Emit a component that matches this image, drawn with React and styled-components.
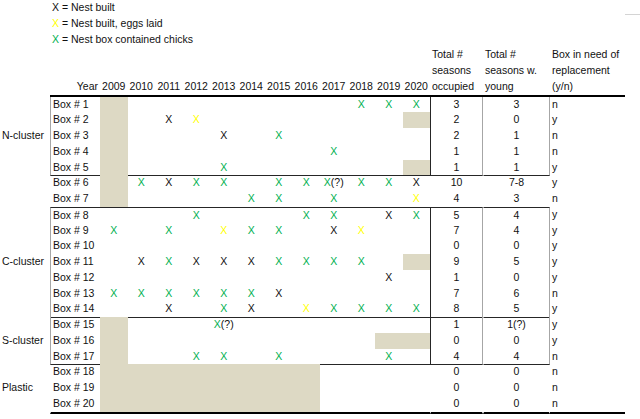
import styled, { createGlobalStyle, css } from "styled-components";

const ROW_H = "15.75px";
const COLS = "50px 50px repeat(12, 27.5px) 53px 67px 75px 15px";
const SHADE = "#ddd9c4";
const DARK = "#262626";
const GRAY = "#a6a6a6";
const TONES = { k: "#111", y: "#ffff00", g: "#00b050" };

const YEARS = [2009, 2010, 2011, 2012, 2013, 2014, 2015, 2016, 2017, 2018, 2019, 2020];

// marks per year: . empty, # shaded, k black X, y yellow X, g green X, G green X with (?)
const SECTIONS = [
  {
    label: "N-cluster",
    at: 2,
    framed: true,
    rows: [
      ["Box # 1", "#........ggg", "3", "3", "n"],
      ["Box # 2", "#.ky.......#", "2", "0", "y"],
      ["Box # 3", "#...k.g.....", "2", "1", "n"],
      ["Box # 4", "#.......g...", "1", "1", "n"],
      ["Box # 5", "#...g......#", "1", "1", "y"],
    ],
  },
  {
    label: "",
    rows: [
      ["Box # 6", "#gkgg.ggGggk", "10", "7-8", "y"],
      ["Box # 7", "#....gg.g..y", "4", "3", "n"],
    ],
  },
  {
    label: "C-cluster",
    at: 3,
    framed: true,
    top: true,
    rows: [
      ["Box # 8", "...g...gg.kg", "5", "4", "y"],
      ["Box # 9", "g.g.ygg.ky..", "7", "4", "y"],
      ["Box # 10", "............", "0", "0", "y"],
      ["Box # 11", ".kgkkkgggg.#", "9", "5", "y"],
      ["Box # 12", "..........k.", "1", "0", "y"],
      ["Box # 13", "ggggggk.....", "7", "6", "n"],
      ["Box # 14", "..k.gk.ygggg", "8", "5", "y"],
    ],
  },
  {
    label: "S-cluster",
    at: 1,
    framed: true,
    rows: [
      ["Box # 15", "#...G.......", "1", "1(?)", "y"],
      ["Box # 16", "#.........##", "0", "0", "y"],
      ["Box # 17", "#..gg.g...g.", "4", "4", "n"],
    ],
  },
  {
    label: "Plastic",
    at: 1,
    thick: true,
    rows: [
      ["Box # 18", "########....", "0", "0", "n"],
      ["Box # 19", "########....", "0", "0", "n"],
      ["Box # 20", "########....", "0", "0", "n"],
    ],
  },
];

const GlobalStyle = createGlobalStyle`
  html, body {
    margin: 0;
    padding: 0;
    background: #fff;
  }
  body {
    font-family: "Liberation Sans", Arial, sans-serif;
    font-size: 10.5px;
    color: #111;
  }
`;

const Page = styled.div`
  width: 640px;
  height: 419px;
  overflow: hidden;
  background: #fff;
`;

const Legend = styled.div`
  display: flex;
  flex-direction: column;
  padding-left: 52px;
`;

const LegendLine = styled.div`
  display: flex;
  height: ${ROW_H};
  line-height: ${ROW_H};
  white-space: nowrap;
`;

// faint edge of a neighbouring cell, top right
const Rule = styled.span`
  margin-left: auto;
  align-self: flex-end;
  width: 15px;
  height: 1px;
  margin-bottom: 1px;
  background: #d4d4d4;
`;

const Mark = styled.span`
  color: ${(p) => TONES[p.$tone]};
`;

const HeaderRow = styled.div`
  display: grid;
  grid-template-columns: ${COLS};
  height: 49.25px;
`;

const HeaderCell = styled.div`
  box-sizing: border-box;
  display: flex;
  align-items: flex-end;
  justify-content: ${(p) => p.$align || "center"};
  padding: 0 ${(p) => (p.$align === "flex-end" ? "2px" : "0")} 0
    ${(p) => (p.$align === "flex-start" ? "2px" : "0")};
  line-height: ${ROW_H};
  white-space: nowrap;
  border-bottom: ${(p) => (p.$open ? "0" : "2px solid #000")};
`;

const Body = styled.div`
  display: flex;
  flex-direction: column;
`;

const Row = styled.div`
  display: grid;
  grid-template-columns: ${COLS};
  height: ${ROW_H};
  line-height: ${ROW_H};
  white-space: nowrap;
`;

const edges = css`
  box-sizing: border-box;
  border-top: ${(p) => (p.$top ? `1px solid ${DARK}` : "0")};
  border-bottom: ${(p) =>
    p.$thick ? "2px solid #000" : p.$bottom ? `1px solid ${DARK}` : "0"};
`;

const ClusterCell = styled.div`
  padding-left: 2px;
`;

const BoxCell = styled.div`
  ${edges};
  padding-left: 2px;
  border-left: 1px solid ${(p) => (p.$framed ? GRAY : "transparent")};
`;

const YearCell = styled.div`
  ${edges};
  text-align: center;
  background: ${(p) => (p.$shaded ? SHADE : "transparent")};
`;

const TotalCell = styled.div`
  ${edges};
  text-align: center;
  border-left: 1px solid ${(p) => (p.$framed && p.$lead ? DARK : "transparent")};
  border-right: 1px solid ${(p) => (p.$framed ? GRAY : "transparent")};
`;

const ReplaceCell = styled.div`
  box-sizing: border-box;
  padding-left: 2px;
  border-bottom: ${(p) => (p.$thick ? "2px solid #000" : "0")};
`;

const YearMark = ({ code }) => {
  if (code === "." || code === "#") return null;
  if (code === "G")
    return (
      <>
        <Mark $tone="g">X</Mark>(?)
      </>
    );
  return <Mark $tone={code}>X</Mark>;
};

const Section = ({ section }) => {
  const { label, at, framed, top, thick, rows } = section;
  return rows.map(([box, marks, occupied, young, repl], i) => {
    const edge = {
      $top: framed && top && i === 0,
      $bottom: framed && i === rows.length - 1,
      $thick: thick && i === rows.length - 1,
    };
    return (
      <Row key={box}>
        <ClusterCell>{i === at ? label : ""}</ClusterCell>
        <BoxCell {...edge} $framed={framed}>
          {box}
        </BoxCell>
        {YEARS.map((year, k) => (
          <YearCell key={year} {...edge} $shaded={marks[k] === "#"}>
            <YearMark code={marks[k]} />
          </YearCell>
        ))}
        <TotalCell {...edge} $framed={framed} $lead>
          {occupied}
        </TotalCell>
        <TotalCell {...edge} $framed={framed}>
          {young}
        </TotalCell>
        <ReplaceCell $thick={edge.$thick}>{repl}</ReplaceCell>
      </Row>
    );
  });
};

export default function App() {
  return (
    <Page>
      <GlobalStyle />
      <Legend>
        <LegendLine>
          X = Nest built
          <Rule />
        </LegendLine>
        <LegendLine>
          <Mark $tone="y">X</Mark>&nbsp;= Nest built, eggs laid
        </LegendLine>
        <LegendLine>
          <Mark $tone="g">X</Mark>&nbsp;= Nest box contained chicks
        </LegendLine>
      </Legend>
      <HeaderRow>
        <HeaderCell $open />
        <HeaderCell $align="flex-end">Year</HeaderCell>
        {YEARS.map((year) => (
          <HeaderCell key={year}>{year}</HeaderCell>
        ))}
        <HeaderCell $align="flex-start">
          Total #<br />
          seasons
          <br />
          occupied
        </HeaderCell>
        <HeaderCell $align="flex-start">
          Total #<br />
          seasons w.
          <br />
          young
        </HeaderCell>
        <HeaderCell $align="flex-start">
          Box in need of
          <br />
          replacement
          <br />
          (y/n)
        </HeaderCell>
        <HeaderCell $open />
      </HeaderRow>
      <Body>
        {SECTIONS.map((section) => (
          <Section key={section.rows[0][0]} section={section} />
        ))}
      </Body>
    </Page>
  );
}
